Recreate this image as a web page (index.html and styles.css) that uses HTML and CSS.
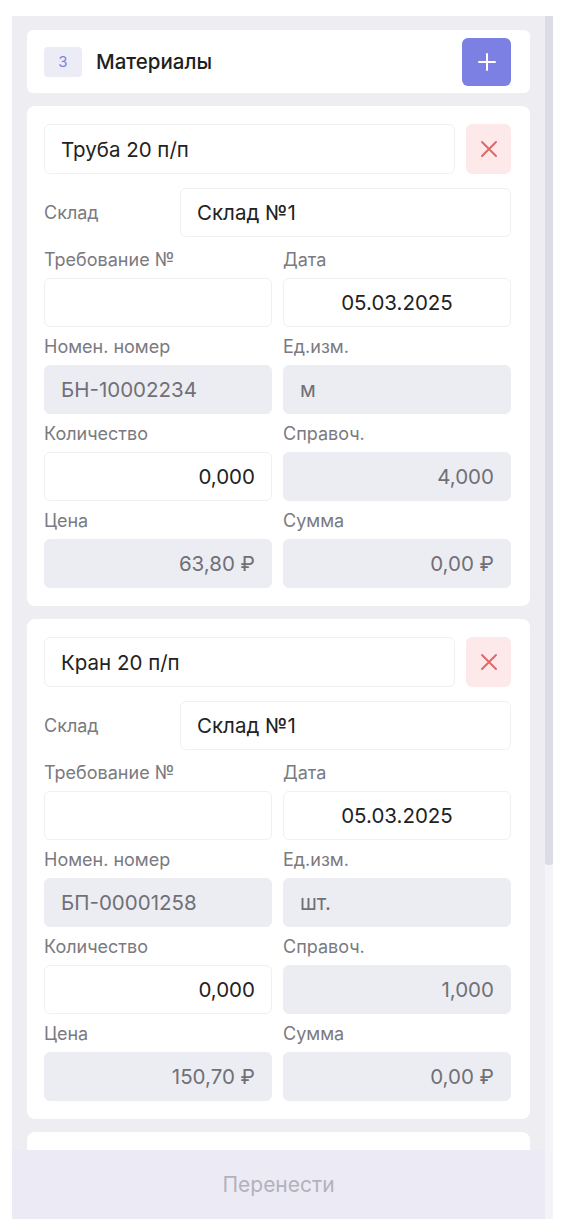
FILE: index.html
```html
<!DOCTYPE html>
<html lang="ru">

<head>
    <meta charset="UTF-8">
    <meta name="viewport" content="width=device-width, initial-scale=1.0">
    <title>Материалы</title>
    <link rel="stylesheet" href="styles.css">
</head>

<body>
    <div class="app">
        <div class="panel">
            <div class="list">
                <div class="section-head">
                    <span class="step">3</span>
                    <span class="section-title">Материалы</span>
                    <button class="add-btn" aria-label="Добавить">
                        <svg width="20" height="20" viewBox="0 0 20 20"><path d="M10 2v16M2 10h16" stroke="#fff" stroke-width="2" stroke-linecap="round"/></svg>
                    </button>
                </div>

                <div class="card">
                    <div class="name-row">
                        <div class="input">Труба 20 п/п</div>
                        <button class="del-btn" aria-label="Удалить">
                            <svg width="20" height="20" viewBox="0 0 20 20"><path d="M3 3l14 14M17 3L3 17" stroke="#e0686a" stroke-width="2" stroke-linecap="round"/></svg>
                        </button>
                    </div>
                    <div class="store-row">
                        <span class="label">Склад</span>
                        <div class="input">Склад №1</div>
                    </div>
                    <div class="fields">
                        <div class="field"><span class="label">Требование №</span><div class="input"></div></div>
                        <div class="field"><span class="label">Дата</span><div class="input center">05.03.2025</div></div>
                        <div class="field"><span class="label">Номен. номер</span><div class="input ro">БН-10002234</div></div>
                        <div class="field"><span class="label">Ед.изм.</span><div class="input ro">м</div></div>
                        <div class="field"><span class="label">Количество</span><div class="input right">0,000</div></div>
                        <div class="field"><span class="label">Справоч.</span><div class="input ro right">4,000</div></div>
                        <div class="field"><span class="label">Цена</span><div class="input ro right">63,80 ₽</div></div>
                        <div class="field"><span class="label">Сумма</span><div class="input ro right">0,00 ₽</div></div>
                    </div>
                </div>

                <div class="card">
                    <div class="name-row">
                        <div class="input">Кран 20 п/п</div>
                        <button class="del-btn" aria-label="Удалить">
                            <svg width="20" height="20" viewBox="0 0 20 20"><path d="M3 3l14 14M17 3L3 17" stroke="#e0686a" stroke-width="2" stroke-linecap="round"/></svg>
                        </button>
                    </div>
                    <div class="store-row">
                        <span class="label">Склад</span>
                        <div class="input">Склад №1</div>
                    </div>
                    <div class="fields">
                        <div class="field"><span class="label">Требование №</span><div class="input"></div></div>
                        <div class="field"><span class="label">Дата</span><div class="input center">05.03.2025</div></div>
                        <div class="field"><span class="label">Номен. номер</span><div class="input ro">БП-00001258</div></div>
                        <div class="field"><span class="label">Ед.изм.</span><div class="input ro">шт.</div></div>
                        <div class="field"><span class="label">Количество</span><div class="input right">0,000</div></div>
                        <div class="field"><span class="label">Справоч.</span><div class="input ro right">1,000</div></div>
                        <div class="field"><span class="label">Цена</span><div class="input ro right">150,70 ₽</div></div>
                        <div class="field"><span class="label">Сумма</span><div class="input ro right">0,00 ₽</div></div>
                    </div>
                </div>

                <div class="card">
                    <div class="name-row">
                        <div class="input"></div>
                    </div>
                </div>
            </div>
            <div class="footer">Перенести</div>
        </div>
        <div class="scrollbar">
            <div class="thumb"></div>
        </div>
    </div>
</body>

</html>
```

FILE: styles.css
```css
body {
    margin: 0;
    font-family: Inter, "Noto Sans", sans-serif;
    background-color: #fff;
    color: #222;
}

.app {
    display: flex;
    padding: 16px 0 0 12px;
    height: 1203px;
}

.panel {
    width: 533px;
    height: 100%;
    display: flex;
    flex-direction: column;
    background: #ededf2;
    overflow: hidden;
}

.list {
    flex: 1;
    overflow: hidden;
    padding: 14px 15px 0;
    display: flex;
    flex-direction: column;
    gap: 13px;
}

.section-head {
    flex-shrink: 0;
    display: flex;
    align-items: center;
    height: 63px;
    padding: 0 19px 0 17px;
    background: #fff;
    border-radius: 6px;
    box-sizing: border-box;
}

.step {
    width: 38px;
    height: 30px;
    display: flex;
    align-items: center;
    justify-content: center;
    background: #ececf6;
    color: #7f82d9;
    font-size: 15px;
    border-radius: 4px;
}

.section-title {
    margin-left: 14px;
    font-size: 20.5px;
    font-weight: 500;
    color: #1f1f22;
    flex: 1;
}

.add-btn {
    width: 49px;
    height: 48px;
    border: none;
    border-radius: 6px;
    background: #7b80e2;
    display: flex;
    align-items: center;
    justify-content: center;
    padding: 0;
}

.card {
    flex-shrink: 0;
    background: #fff;
    border-radius: 8px;
    padding: 18px 19px 18px 17px;
}

.name-row {
    display: flex;
    gap: 11px;
    height: 50px;
}

.name-row .input {
    flex: 1;
    height: 50px;
}

.del-btn {
    width: 45px;
    height: 50px;
    border: none;
    border-radius: 6px;
    background: #fde9e9;
    display: flex;
    align-items: center;
    justify-content: center;
    padding: 0;
}

.store-row {
    display: grid;
    grid-template-columns: 136px 1fr;
    align-items: center;
    margin-top: 14px;
}

.label {
    font-size: 18px;
    line-height: 20px;
    color: #7a7a80;
}

.input {
    height: 49px;
    box-sizing: border-box;
    display: flex;
    align-items: center;
    padding: 0 16px;
    border: 1px solid #f0f0f3;
    border-radius: 6px;
    background: #fff;
    font-size: 20.5px;
    color: #222;
}

.input.ro {
    background: #ececf3;
    border-color: #ececf3;
    color: #707076;
}

.input.right {
    justify-content: flex-end;
}

.input.center {
    justify-content: center;
}

.fields {
    display: grid;
    grid-template-columns: 1fr 1fr;
    column-gap: 11px;
    row-gap: 10px;
    margin-top: 13px;
}

.field {
    display: flex;
    flex-direction: column;
    gap: 8px;
}

.footer {
    flex-shrink: 0;
    height: 69px;
    display: flex;
    align-items: center;
    justify-content: center;
    background: #ecebf5;
    color: #b2b2bc;
    font-size: 21px;
}

.scrollbar {
    width: 8px;
    height: 100%;
    background: #f4f4f8;
}

.thumb {
    height: 849px;
    background: #dcdce7;
    border-radius: 0 0 3px 3px;
}
```
